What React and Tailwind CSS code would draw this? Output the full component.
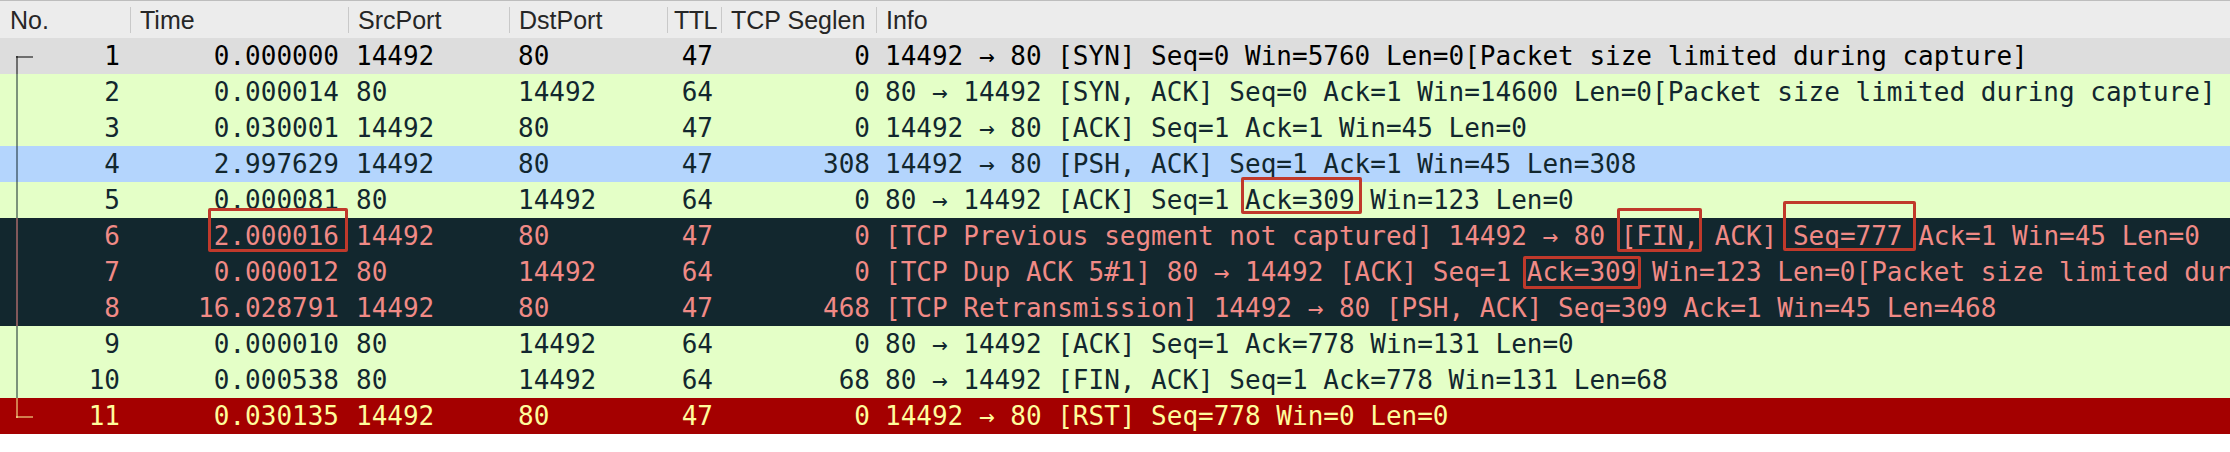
import React from 'react';

const COLS = 'grid grid-cols-[130px_218px_161px_158px_54px_155px_1fr]';

const styles = {
  gray: 'bg-[#dddddd] text-[#000000]',
  green: 'bg-[#e4ffc7] text-[#12272e]',
  blue: 'bg-[#b4d5fd] text-[#12272e]',
  dark: 'bg-[#12272e] text-[#f08a86]',
  red: 'bg-[#a40000] text-[#fffc9c]',
};

// offsets of the red annotation boxes, relative to the row top and the boxed text
const boxes = {
  time: '-top-[10px] bottom-[2px] -left-[6px] -right-[9px]',
  ack5: '-top-[5px] bottom-[4px] -left-[4px] -right-[7px]',
  fin: '-top-[10px] bottom-[2px] -left-[4px] -right-[3px]',
  seq: '-top-[17px] bottom-[3px] -left-[10px] -right-[13px]',
  ack7: 'top-[2px] bottom-[1px] -left-[4px] -right-[5px]',
};

const rows = [
  { no: 1, time: '0.000000', src: '14492', dst: '80', ttl: '47', len: '0', style: 'gray',
    info: ['14492 → 80 [SYN] Seq=0 Win=5760 Len=0[Packet size limited during capture]'] },
  { no: 2, time: '0.000014', src: '80', dst: '14492', ttl: '64', len: '0', style: 'green',
    info: ['80 → 14492 [SYN, ACK] Seq=0 Ack=1 Win=14600 Len=0[Packet size limited during capture]'] },
  { no: 3, time: '0.030001', src: '14492', dst: '80', ttl: '47', len: '0', style: 'green',
    info: ['14492 → 80 [ACK] Seq=1 Ack=1 Win=45 Len=0'] },
  { no: 4, time: '2.997629', src: '14492', dst: '80', ttl: '47', len: '308', style: 'blue',
    info: ['14492 → 80 [PSH, ACK] Seq=1 Ack=1 Win=45 Len=308'] },
  { no: 5, time: '0.000081', src: '80', dst: '14492', ttl: '64', len: '0', style: 'green',
    info: ['80 → 14492 [ACK] Seq=1 ', { t: 'Ack=309', box: 'ack5' }, ' Win=123 Len=0'] },
  { no: 6, time: '2.000016', timeBox: true, src: '14492', dst: '80', ttl: '47', len: '0', style: 'dark',
    info: ['[TCP Previous segment not captured] 14492 → 80 ', { t: '[FIN,', box: 'fin' }, ' ACK] ', { t: 'Seq=777', box: 'seq' }, ' Ack=1 Win=45 Len=0'] },
  { no: 7, time: '0.000012', src: '80', dst: '14492', ttl: '64', len: '0', style: 'dark',
    info: ['[TCP Dup ACK 5#1] 80 → 14492 [ACK] Seq=1 ', { t: 'Ack=309', box: 'ack7' }, ' Win=123 Len=0[Packet size limited during capture]'] },
  { no: 8, time: '16.028791', src: '14492', dst: '80', ttl: '47', len: '468', style: 'dark',
    info: ['[TCP Retransmission] 14492 → 80 [PSH, ACK] Seq=309 Ack=1 Win=45 Len=468'] },
  { no: 9, time: '0.000010', src: '80', dst: '14492', ttl: '64', len: '0', style: 'green',
    info: ['80 → 14492 [ACK] Seq=1 Ack=778 Win=131 Len=0'] },
  { no: 10, time: '0.000538', src: '80', dst: '14492', ttl: '64', len: '68', style: 'green',
    info: ['80 → 14492 [FIN, ACK] Seq=1 Ack=778 Win=131 Len=68'] },
  { no: 11, time: '0.030135', src: '14492', dst: '80', ttl: '47', len: '0', style: 'red',
    info: ['14492 → 80 [RST] Seq=778 Win=0 Len=0'] },
];

const Boxed = ({ children, box }) => (
  <span className="relative inline-block h-9">
    {children}
    <span className={`absolute z-10 rounded-[2px] border-[3px] border-[#c0392b] ${boxes[box]}`} />
  </span>
);

// conversation bracket drawn in the No. column
const Bracket = ({ first, last }) => (
  <>
    {(first || last) && <span className="absolute left-[16px] top-[18px] h-[2px] w-[17px] bg-current opacity-50" />}
    <span
      className={`absolute left-[16px] w-[2px] bg-current opacity-50 ${first ? 'top-[18px] bottom-0' : last ? 'top-0 h-[20px]' : 'top-0 bottom-0'}`}
    />
  </>
);

const HeaderCell = ({ children, first, pad = 'pl-[9px]' }) => (
  <div className="flex items-center whitespace-nowrap">
    {!first && <div className="h-[26px] w-px shrink-0 bg-[#c9c9c9]" />}
    <span className={first ? 'pl-[10px]' : pad}>{children}</span>
  </div>
);

const App = () => {
  return (
    <div className="h-[452px] w-[2230px] overflow-hidden bg-white">
      <div className={`${COLS} h-[38px] border-t border-[#bdbdbd] bg-[#ececec] font-['Liberation_Sans',Arial,sans-serif] text-[25px] leading-[36px] text-[#262626]`}>
        <HeaderCell first>No.</HeaderCell>
        <HeaderCell>Time</HeaderCell>
        <HeaderCell>SrcPort</HeaderCell>
        <HeaderCell>DstPort</HeaderCell>
        <HeaderCell pad="pl-[6px] tracking-[-0.5px]">TTL</HeaderCell>
        <HeaderCell>TCP Seglen</HeaderCell>
        <HeaderCell>Info</HeaderCell>
      </div>

      <div className="font-['DejaVu_Sans_Mono',monospace] text-[26px] leading-[36px]">
        {rows.map((r, i) => (
          <div key={r.no} className={`${COLS} relative h-9 whitespace-pre ${styles[r.style]}`}>
            <div className="relative pr-[10px] text-right">
              <Bracket first={i === 0} last={i === rows.length - 1} />
              {r.no}
            </div>
            <div className="pr-[9px] text-right">
              {r.timeBox ? <Boxed box="time">{r.time}</Boxed> : r.time}
            </div>
            <div className="pl-[8px]">{r.src}</div>
            <div className="pl-[9px]">{r.dst}</div>
            <div className="pr-[8px] text-right">{r.ttl}</div>
            <div className="pr-[6px] text-right">{r.len}</div>
            <div className="pl-[9px]">
              {r.info.map((seg, j) =>
                typeof seg === 'string' ? (
                  <span key={j}>{seg}</span>
                ) : (
                  <Boxed key={j} box={seg.box}>{seg.t}</Boxed>
                )
              )}
            </div>
          </div>
        ))}
      </div>
    </div>
  );
};

export default App;
